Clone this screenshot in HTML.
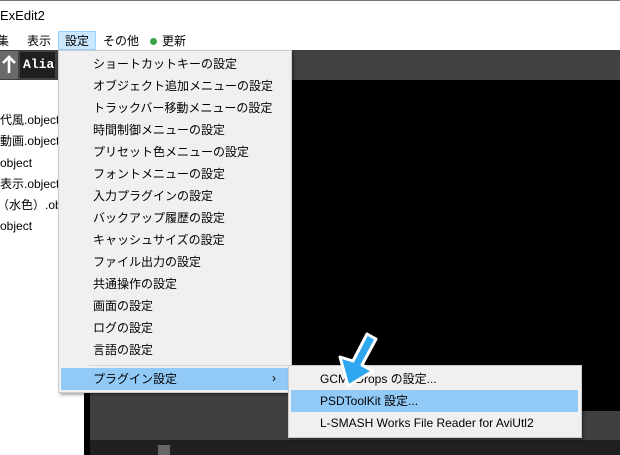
<!DOCTYPE html>
<html><head><meta charset="utf-8"><style>
*{margin:0;padding:0;box-sizing:border-box}
body{width:620px;height:455px;position:relative;overflow:hidden;background:#fff;font-family:"Liberation Sans","Noto Sans CJK JP",sans-serif;font-size:12px;color:#000}
.a{position:absolute}
.t{position:absolute;white-space:nowrap;line-height:16px}
</style></head><body>
<div class="a" style="left:0;top:0;width:620px;height:1px;background:#777"></div>
<div class="t" style="left:0;top:8px;font-size:13px">ExEdit2</div>
<div class="t" style="left:-3px;top:33px">集</div>
<div class="t" style="left:27px;top:33px">表示</div>
<div class="a" style="left:58px;top:31px;width:38px;height:19px;background:#cce8ff;border:1px solid #99d1ff"></div>
<div class="t" style="left:65px;top:33px">設定</div>
<div class="t" style="left:103px;top:33px">その他</div>
<div class="a" style="left:150px;top:38px;width:7px;height:7px;border-radius:50%;background:#3aa345"></div>
<div class="t" style="left:162px;top:33px">更新</div>
<div class="a" style="left:0;top:50px;width:620px;height:30px;background:#424242"></div>
<div class="a" style="left:0;top:51px;width:18px;height:28px;background:#6a6a6a"></div>
<svg class="a" style="left:0;top:51px" width="18" height="28"><path d="M9 6 L9 22 M3 12 L9 6 L15 12" stroke="#fff" stroke-width="2.6" fill="none"/></svg>
<div class="a" style="left:20px;top:52px;width:35px;height:26px;background:#1f1f1f;color:#fff;font-family:'Liberation Mono',monospace;font-size:13px;font-weight:bold;line-height:26px;padding-left:3px">Alia</div>
<div class="a" style="left:0;top:80px;width:85px;height:375px;background:#fff"></div>
<div class="a" style="left:84px;top:80px;width:536px;height:375px;background:#000"></div>
<div class="a" style="left:90px;top:392px;width:210px;height:48px;background:#404040"></div>
<div class="a" style="left:90px;top:411px;width:530px;height:29px;background:#404040"></div>
<div class="a" style="left:90px;top:440px;width:530px;height:15px;background:#202020"></div>
<div class="a" style="left:158px;top:445px;width:12px;height:10px;background:#666"></div>
<div class="t" style="left:0;top:112px">代風.object</div>
<div class="t" style="left:0;top:133px">動画.object</div>
<div class="t" style="left:0;top:155px">object</div>
<div class="t" style="left:0;top:176px">表示.object</div>
<div class="t" style="left:-3px;top:197px">（水色）.object</div>
<div class="t" style="left:0;top:218px">object</div>
<div class="a" style="left:58px;top:50px;width:234px;height:343px;background:#f0f0f0;border:1px solid #ccc;box-shadow:2px 2px 3px rgba(0,0,0,.35)"></div>
<div class="a" style="left:89px;top:365px;width:200px;height:1px;background:#d7d7d7"></div>
<div class="a" style="left:61px;top:368px;width:228px;height:22px;background:#91c9f7"></div>
<div class="t" style="left:93px;top:56px">ショートカットキーの設定</div>
<div class="t" style="left:93px;top:78px">オブジェクト追加メニューの設定</div>
<div class="t" style="left:93px;top:100px">トラックバー移動メニューの設定</div>
<div class="t" style="left:93px;top:122px">時間制御メニューの設定</div>
<div class="t" style="left:93px;top:144px">プリセット色メニューの設定</div>
<div class="t" style="left:93px;top:166px">フォントメニューの設定</div>
<div class="t" style="left:93px;top:188px">入力プラグインの設定</div>
<div class="t" style="left:93px;top:210px">バックアップ履歴の設定</div>
<div class="t" style="left:93px;top:232px">キャッシュサイズの設定</div>
<div class="t" style="left:93px;top:254px">ファイル出力の設定</div>
<div class="t" style="left:93px;top:276px">共通操作の設定</div>
<div class="t" style="left:93px;top:298px">画面の設定</div>
<div class="t" style="left:93px;top:320px">ログの設定</div>
<div class="t" style="left:93px;top:342px">言語の設定</div>
<div class="t" style="left:93px;top:371px">プラグイン設定</div>
<div class="t" style="left:272px;top:370px">›</div>
<div class="a" style="left:288px;top:365px;width:294px;height:73px;background:#f0f0f0;border:1px solid #ccc;box-shadow:2px 2px 3px rgba(0,0,0,.35)"></div>
<div class="a" style="left:291px;top:390px;width:287px;height:22px;background:#91c9f7"></div>
<div class="t" style="left:320px;top:371px">GCMZDrops の設定...</div>
<div class="t" style="left:320px;top:393px">PSDToolKit 設定...</div>
<div class="t" style="left:320px;top:415px">L-SMASH Works File Reader for AviUtl2</div>
<svg class="a" style="left:330px;top:325px" width="60" height="68" viewBox="330 325 60 68">
<path d="M367 334 L376 339 L362 365 L373 371 L348 386 L340 357 L353 361 Z" fill="#2ea6f0" stroke="#fff" stroke-width="3" stroke-linejoin="round"/>
</svg>
</body></html>
